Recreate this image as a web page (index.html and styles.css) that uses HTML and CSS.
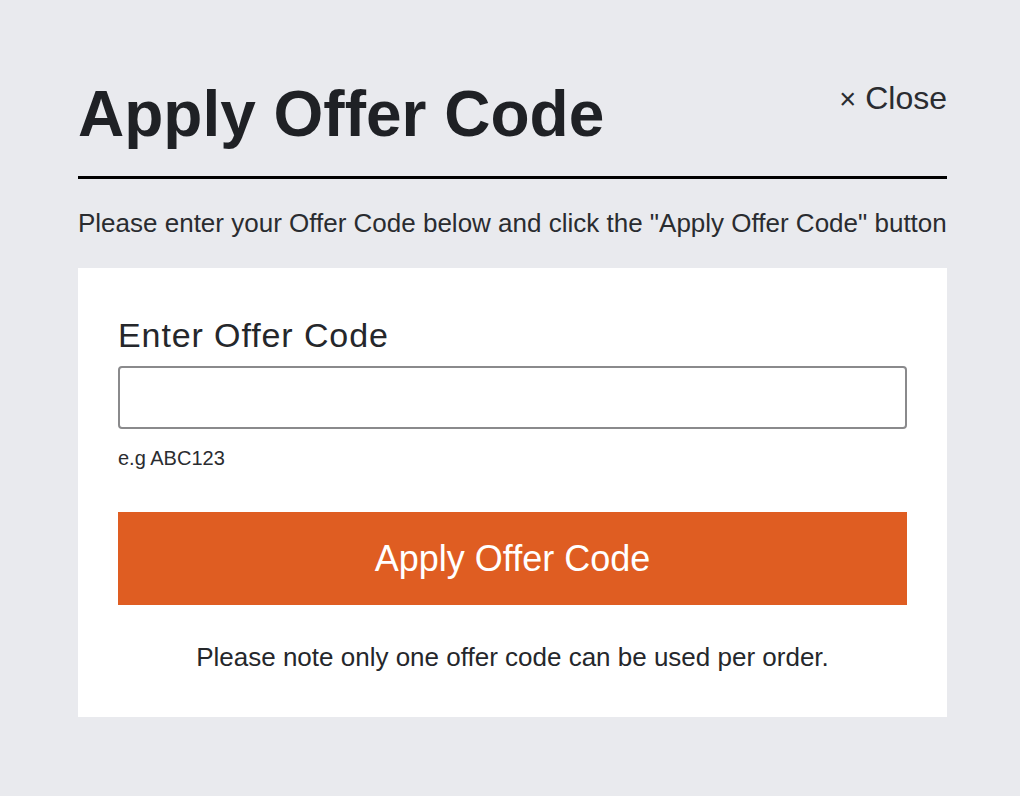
FILE: index.html
```html
<!DOCTYPE html>
<html lang="en">
<head>
    <meta charset="UTF-8">
    <meta name="viewport" content="width=device-width, initial-scale=1.0">
    <title>Apply Offer Code</title>
    <link rel="stylesheet" href="styles.css">
</head>
<body>

    <div class="modal">
        <div class="modal-head">
            <h1 class="title">Apply Offer Code</h1>
            <a href="#" class="close"><span class="close-x">&times;</span> Close</a>
        </div>

        <p class="intro">Please enter your Offer Code below and click the "Apply Offer Code" button</p>

        <div class="card">
            <label for="code" class="label">Enter Offer Code</label>
            <input type="text" id="code" class="input">
            <div class="hint">e.g ABC123</div>

            <button class="apply">Apply Offer Code</button>

            <p class="note">Please note only one offer code can be used per order.</p>
        </div>
    </div>

</body>
</html>
```

FILE: styles.css
```css
html, body {
    margin: 0;
    padding: 0;
}

body {
    background-color: #e9eaee;
    font-family: "Liberation Sans", Arial, sans-serif;
    color: #212327;
}

.modal {
    width: 869px;
    margin-left: 78px;
    padding-top: 72px;
}

.modal-head {
    display: flex;
    justify-content: space-between;
    align-items: flex-start;
    border-bottom: 3px solid #000;
    padding-bottom: 20px;
}

.title {
    margin: 0;
    font-size: 64px;
    line-height: 84px;
    font-weight: bold;
    color: #1f2125;
}

.close {
    margin-top: 8px;
    font-size: 32px;
    color: #2a2c30;
    text-decoration: none;
}

.close-x {
    font-size: 29px;
}

.intro {
    margin: 0;
    padding-top: 28px;
    padding-bottom: 29px;
    font-size: 26px;
    line-height: 32px;
    color: #2a2c30;
    white-space: nowrap;
}

.card {
    background-color: #fff;
    padding: 47px 40px 45px 40px;
}

.label {
    display: block;
    font-size: 34px;
    line-height: 40px;
    letter-spacing: 0.9px;
    color: #25272b;
}

.input {
    display: block;
    box-sizing: border-box;
    width: 789px;
    height: 63px;
    margin-top: 11px;
    border: 2px solid #8a8a8c;
    border-radius: 4px;
    background: #fff;
}

.hint {
    margin-top: 17px;
    font-size: 20px;
    line-height: 24px;
    color: #2a2c30;
}

.apply {
    display: block;
    width: 789px;
    height: 93px;
    margin-top: 42px;
    border: none;
    background-color: #df5d22;
    color: #fff;
    font-family: "Liberation Sans", Arial, sans-serif;
    font-size: 36px;
}

.note {
    margin: 37px 0 0 0;
    text-align: center;
    font-size: 26px;
    line-height: 30px;
    color: #25272b;
}
```
